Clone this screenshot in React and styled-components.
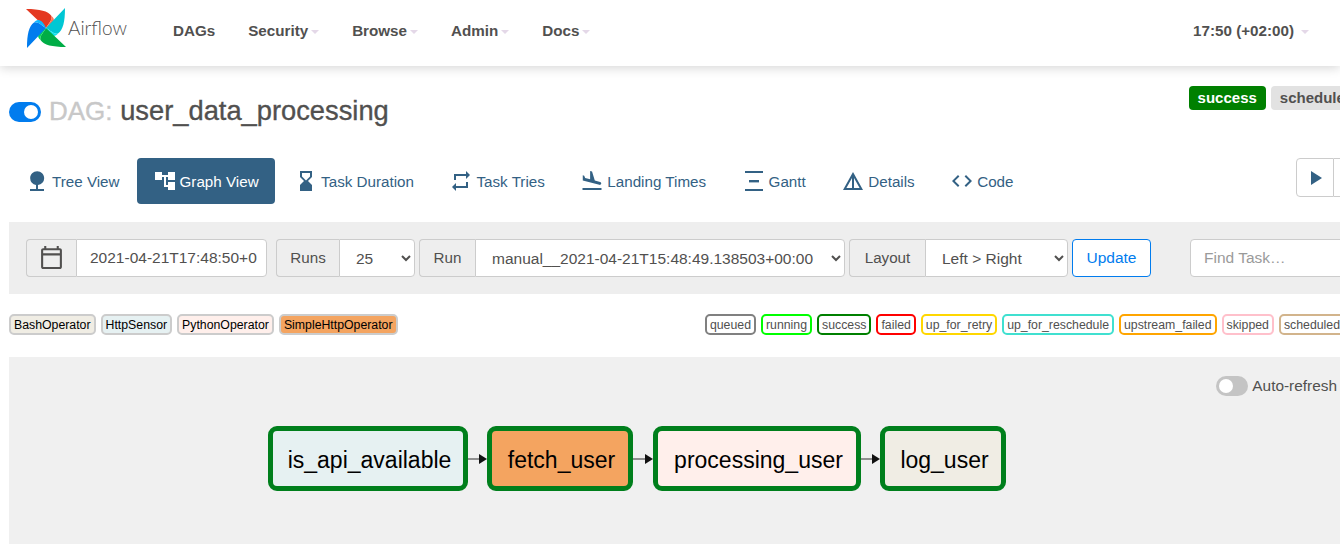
import React from 'react'
import styled, { createGlobalStyle } from 'styled-components'
import {
  MdNature,
  MdAccountTree,
  MdHourglassBottom,
  MdRepeat,
  MdFlightLand,
  MdDetails,
  MdCode,
  MdPlayArrow,
  MdOutlineCalendarToday,
} from 'react-icons/md'

const GlobalStyle = createGlobalStyle`
  html, body {
    margin: 0;
    padding: 0;
    background: #fff;
    font-family: "Liberation Sans", Arial, sans-serif;
    color: #51504f;
  }
  #root {
    width: 1340px;
    height: 544px;
    overflow: hidden;
  }
`

const bladeColors = [
  { main: '#e43921', light: '#ff7557', turn: 0 },
  { main: '#00c7d4', light: '#11e1ee', turn: 90 },
  { main: '#00ad46', light: '#04d659', turn: 180 },
  { main: '#017cee', light: '#0cb6ff', turn: 270 },
]

function Logo() {
  return (
    <svg width="40" height="40" viewBox="0 0 40 40">
      {bladeColors.map((b) => (
        <g key={b.turn} transform={`rotate(${b.turn} 20 20)`}>
          <path d="M0 1 L20 20 C23 15 26.5 12 25.5 8 C22 3 14 1 0 1 Z" fill={b.main} />
          <path d="M20 20 C23 15 26.5 12 25.5 8 C29.5 11 29 16 20 20 Z" fill={b.light} />
        </g>
      ))}
    </svg>
  )
}

function GanttIcon() {
  return (
    <svg width="24" height="24" viewBox="0 0 24 24" fill="currentColor">
      <rect x="3" y="2" width="18" height="2" />
      <rect x="7" y="11" width="10" height="2.4" />
      <rect x="3" y="20" width="18" height="2" />
    </svg>
  )
}

function Edge({ width }) {
  return (
    <svg width={width} height="12" viewBox={`0 0 ${width} 12`}>
      <line x1="0" y1="6" x2={width - 6} y2="6" stroke="#777" strokeWidth="1.6" />
      <path d={`M${width - 8} 1 L${width} 6 L${width - 8} 11 Z`} fill="#111" />
    </svg>
  )
}

const tabs = [
  { label: 'Tree View', icon: <MdNature size={24} /> },
  { label: 'Graph View', icon: <MdAccountTree size={24} />, active: true },
  { label: 'Task Duration', icon: <MdHourglassBottom size={24} /> },
  { label: 'Task Tries', icon: <MdRepeat size={24} /> },
  { label: 'Landing Times', icon: <MdFlightLand size={24} /> },
  { label: 'Gantt', icon: <GanttIcon /> },
  { label: 'Details', icon: <MdDetails size={24} /> },
  { label: 'Code', icon: <MdCode size={24} /> },
]

const operators = [
  { name: 'BashOperator', bg: '#f0ede4' },
  { name: 'HttpSensor', bg: '#e6f1f2' },
  { name: 'PythonOperator', bg: '#ffefeb' },
  { name: 'SimpleHttpOperator', bg: '#f4a460' },
]

const states = [
  { name: 'queued', color: '#808080' },
  { name: 'running', color: '#00ff00' },
  { name: 'success', color: '#008000' },
  { name: 'failed', color: '#ff0000' },
  { name: 'up_for_retry', color: '#ffd700' },
  { name: 'up_for_reschedule', color: '#40e0d0' },
  { name: 'upstream_failed', color: '#ffa500' },
  { name: 'skipped', color: '#ffc0cb' },
  { name: 'scheduled', color: '#d2b48c' },
]

const tasks = [
  { name: 'is_api_available', bg: '#e6f1f2', width: 200 },
  { name: 'fetch_user', bg: '#f4a460', width: 146, edge: 19 },
  { name: 'processing_user', bg: '#ffefeb', width: 208, edge: 20 },
  { name: 'log_user', bg: '#f0ede4', width: 126, edge: 19 },
]

export default function App() {
  return (
    <>
      <GlobalStyle />
      <Nav>
        <Brand>
          <Logo />
          <BrandName>Airflow</BrandName>
        </Brand>
        <NavLink>DAGs</NavLink>
        <NavLink $caret>Security</NavLink>
        <NavLink $caret>Browse</NavLink>
        <NavLink $caret>Admin</NavLink>
        <NavLink $caret>Docs</NavLink>
        <NavTime $caret>17:50 (+02:00)</NavTime>
      </Nav>
      <Main>
        <TitleRow>
          <Toggle $on />
          <Title>
            <span>DAG:</span> user_data_processing
          </Title>
          <Badges>
            <Badge $success>success</Badge>
            <Badge>scheduled</Badge>
          </Badges>
        </TitleRow>

        <TabRow>
          {tabs.map((t) => (
            <Tab key={t.label} $active={t.active}>
              {t.icon}
              {t.label}
            </Tab>
          ))}
          <Actions>
            <ActionBtn>
              <MdPlayArrow size={24} />
            </ActionBtn>
            <ActionBtn />
          </Actions>
        </TabRow>

        <FilterBar>
          <DateGroup>
            <Addon $w={50}>
              <MdOutlineCalendarToday size={25} />
            </Addon>
            <TextInput $w={191} defaultValue="2021-04-21T17:48:50+0" readOnly />
          </DateGroup>
          <Group>
            <Addon $w={63}>Runs</Addon>
            <Select $w={76} defaultValue="25">
              <option>25</option>
            </Select>
          </Group>
          <Group>
            <Addon $w={56}>Run</Addon>
            <Select $w={370} defaultValue="manual">
              <option value="manual">manual__2021-04-21T15:48:49.138503+00:00</option>
            </Select>
          </Group>
          <Group>
            <Addon $w={76}>Layout</Addon>
            <Select $w={143} defaultValue="LR">
              <option value="LR">Left &gt; Right</option>
            </Select>
          </Group>
          <UpdateBtn>Update</UpdateBtn>
          <FindInput placeholder="Find Task…" />
        </FilterBar>

        <LegendRow>
          <Legend>
            {operators.map((o) => (
              <OperatorTag key={o.name} $bg={o.bg}>
                {o.name}
              </OperatorTag>
            ))}
          </Legend>
          <StateLegend>
            {states.map((s) => (
              <StateTag key={s.name} $color={s.color}>
                {s.name}
              </StateTag>
            ))}
          </StateLegend>
        </LegendRow>

        <GraphPanel>
          <RefreshRow>
            <Toggle />
            <RefreshLabel>Auto-refresh</RefreshLabel>
          </RefreshRow>
          <Dag>
            {tasks.map((t) => (
              <React.Fragment key={t.name}>
                {t.edge && <Edge width={t.edge} />}
                <Node $bg={t.bg} $w={t.width}>
                  {t.name}
                </Node>
              </React.Fragment>
            ))}
          </Dag>
        </GraphPanel>
      </Main>
    </>
  )
}

const Nav = styled.nav`
  height: 66px;
  display: flex;
  align-items: center;
  padding-left: 26px;
  box-sizing: border-box;
  background: #fff;
  box-shadow: 0 2px 10px rgba(0, 0, 0, 0.16);
`

const Brand = styled.div`
  width: 147px;
  display: flex;
  align-items: center;
  gap: 2px;
  margin-top: -10px;
`

const BrandName = styled.span`
  font-family: Lato, sans-serif;
  font-weight: 300;
  font-size: 19px;
  color: #51504f;
  margin-top: -2px;
`

const NavLink = styled.a`
  display: flex;
  align-items: center;
  font-size: 15.2px;
  font-weight: 700;
  color: #51504f;
  margin-right: 33px;
  margin-top: -6px;
  ${(p) =>
    p.$caret &&
    `&::after {
      content: '';
      width: 0;
      height: 0;
      margin: 3px 0 0 3px;
      border-left: 4.5px solid transparent;
      border-right: 4.5px solid transparent;
      border-top: 4px solid #e4d8e8;
    }`}
`

const NavTime = styled(NavLink)`
  margin-left: auto;
  margin-right: 31px;
  &::after {
    margin-left: 7px;
  }
`

const Main = styled.main`
  width: 1355px;
  padding-left: 9px;
  box-sizing: border-box;
`

const TitleRow = styled.div`
  height: 92px;
  display: flex;
  align-items: center;
`

const Toggle = styled.span`
  width: 32px;
  height: 20px;
  border-radius: 10px;
  background: ${(p) => (p.$on ? '#017cee' : '#c4c4c4')};
  position: relative;
  flex: none;
  &::after {
    content: '';
    position: absolute;
    top: 3px;
    left: ${(p) => (p.$on ? '15px' : '3px')};
    width: 14px;
    height: 14px;
    border-radius: 50%;
    background: #fff;
  }
`

const Title = styled.h1`
  margin: -2px 0 0 8px;
  font-size: 27.3px;
  font-weight: 500;
  color: #51504f;
  -webkit-text-stroke: 0.35px #51504f;
  span {
    font-size: 26px;
    color: #c8c8c8;
    -webkit-text-stroke: 0.35px #c8c8c8;
  }
`

const Badges = styled.div`
  margin-left: auto;
  margin-right: -8px;
  display: flex;
  gap: 5px;
  align-self: flex-start;
  margin-top: 20px;
`

const Badge = styled.span`
  height: 24px;
  line-height: 24px;
  padding: 0 9px;
  border-radius: 4px;
  font-size: 15px;
  font-weight: 700;
  color: ${(p) => (p.$success ? '#fff' : '#51504f')};
  background: ${(p) => (p.$success ? '#008000' : '#e2e2e2')};
`

const TabRow = styled.div`
  height: 46px;
  display: flex;
  align-items: center;
  gap: 3.5px;
`

const Tab = styled.a`
  height: 46px;
  display: flex;
  align-items: center;
  gap: 3px;
  padding: 0 16px;
  box-sizing: border-box;
  border-radius: 4px;
  font-size: 15.2px;
  color: ${(p) => (p.$active ? '#fff' : '#336184')};
  background: ${(p) => (p.$active ? '#336184' : 'transparent')};
  &:first-child {
    margin-right: -2.5px;
  }
`

const Actions = styled.div`
  margin-left: auto;
  margin-right: -17px;
  align-self: flex-start;
  display: flex;
`

const ActionBtn = styled.button`
  width: 38px;
  height: 39px;
  padding: 0;
  display: flex;
  align-items: center;
  justify-content: center;
  background: #fff;
  color: #336184;
  border: 1px solid #ccc;
  border-radius: 4px 0 0 4px;
  & + & {
    border-left: 0;
    border-radius: 0 4px 4px 0;
  }
`

const FilterBar = styled.div`
  margin-top: 18px;
  height: 72px;
  padding-left: 17px;
  display: flex;
  align-items: center;
  gap: 4px;
  background: #eee;
`

const Group = styled.div`
  display: flex;
  height: 38px;
`

const DateGroup = styled(Group)`
  margin-right: 5px;
`

const Addon = styled.span`
  width: ${(p) => p.$w}px;
  box-sizing: border-box;
  display: flex;
  align-items: center;
  justify-content: center;
  padding-bottom: 2px;
  font-size: 15.2px;
  color: #51504f;
  background: #eee;
  border: 1px solid #ccc;
  border-right: 0;
  border-radius: 4px 0 0 4px;
`

const TextInput = styled.input`
  width: ${(p) => p.$w}px;
  box-sizing: border-box;
  padding: 0 9px 0 13px;
  font: 15.5px "Liberation Sans", Arial, sans-serif;
  color: #51504f;
  background: #fff;
  border: 1px solid #ccc;
  border-radius: 0 4px 4px 0;
  outline: none;
`

const Select = styled.select`
  width: ${(p) => p.$w}px;
  box-sizing: border-box;
  padding: 0 8px 0 12px;
  font: 15.5px "Liberation Sans", Arial, sans-serif;
  color: #51504f;
  background: #fff;
  border: 1px solid #ccc;
  border-radius: 0 4px 4px 0;
  outline: none;
`

const UpdateBtn = styled.button`
  width: 79px;
  height: 38px;
  padding: 0;
  font: 15.5px "Liberation Sans", Arial, sans-serif;
  color: #017cee;
  background: #fff;
  border: 1px solid #017cee;
  border-radius: 4px;
`

const FindInput = styled.input`
  margin-left: 35px;
  width: 160px;
  height: 38px;
  box-sizing: border-box;
  padding: 0 13px;
  font: 15.5px "Liberation Sans", Arial, sans-serif;
  background: #fff;
  border: 1px solid #ccc;
  border-radius: 4px 0 0 4px;
  outline: none;
  &::placeholder {
    color: #9a9a9a;
  }
`

const LegendRow = styled.div`
  margin-top: 20px;
  display: flex;
  justify-content: space-between;
`

const Legend = styled.div`
  display: flex;
  gap: 5px;
`

const StateLegend = styled(Legend)`
  margin-right: 10px;
`

const Tag = styled.span`
  height: 21px;
  box-sizing: border-box;
  padding: 0 3px;
  display: flex;
  align-items: center;
  font-size: 12.3px;
  border-radius: 5px;
  background: #fff;
`

const OperatorTag = styled(Tag)`
  color: #000;
  background: ${(p) => p.$bg};
  border: 2px solid #ccc;
`

const StateTag = styled(Tag)`
  color: #51504f;
  border: 2px solid ${(p) => p.$color};
`

const GraphPanel = styled.section`
  margin-top: 22px;
  height: 200px;
  background: #f0f0f0;
  padding-top: 19px;
  box-sizing: border-box;
`

const RefreshRow = styled.div`
  display: flex;
  align-items: center;
  justify-content: flex-end;
  gap: 4px;
  padding-right: 18px;
`

const RefreshLabel = styled.span`
  font-size: 15.4px;
  color: #51504f;
`

const Dag = styled.div`
  margin: 30px 0 0 259px;
  display: flex;
  align-items: center;
`

const Node = styled.div`
  width: ${(p) => p.$w}px;
  height: 65px;
  box-sizing: border-box;
  padding: 3px 0 0 3px;
  display: flex;
  align-items: center;
  justify-content: center;
  font-size: 23px;
  color: #000;
  background: ${(p) => p.$bg};
  border: 5px solid #007f1c;
  border-radius: 9px;
`
